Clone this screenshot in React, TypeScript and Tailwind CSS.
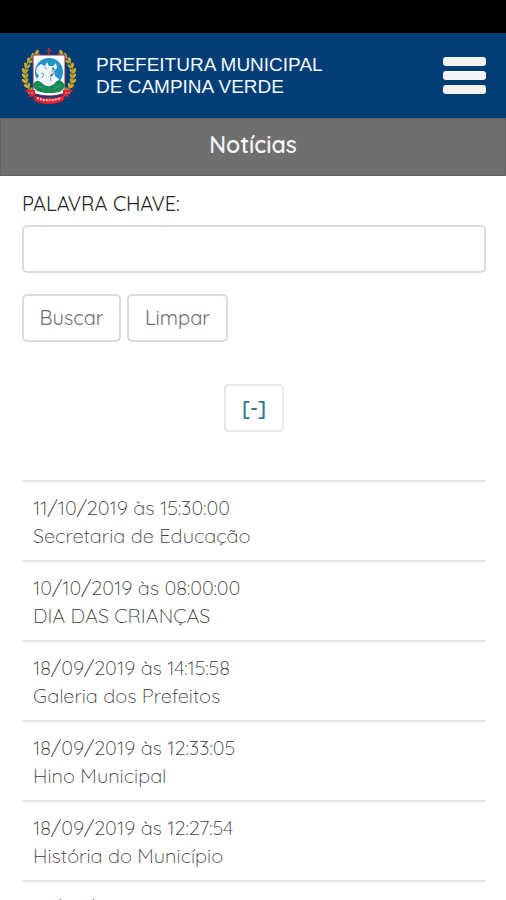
import {useState} from "react";

const news = [
  {id: 1, date: "11/10/2019 às 15:30:00", title: "Secretaria de Educação"},
  {id: 2, date: "10/10/2019 às 08:00:00", title: "DIA DAS CRIANÇAS"},
  {id: 3, date: "18/09/2019 às 14:15:58", title: "Galeria dos Prefeitos"},
  {id: 4, date: "18/09/2019 às 12:33:05", title: "Hino Municipal"},
  {id: 5, date: "18/09/2019 às 12:27:54", title: "História do Município"},
  {id: 6, date: "18/09/2019", title: ""},
];

// wheat leaves on the left side of the coat of arms, from top to bottom
const leaves = [
  {x: 18, y: 6, r: 60},
  {x: 14, y: 9, r: 45},
  {x: 10, y: 13, r: 30},
  {x: 7, y: 18, r: 15},
  {x: 5, y: 23, r: 5},
  {x: 5, y: 28, r: -5},
  {x: 5, y: 33, r: -15},
  {x: 7, y: 38, r: -25},
  {x: 10, y: 43, r: -35},
];

const Branch = () => (
  <g>
    <path
      d="M19 5C2 13 1 33 12 45"
      fill="none"
      stroke="#a58b28"
      strokeWidth="1.5"
    />
    {leaves.map((leaf) => (
      <g key={leaf.y} transform={`translate(${leaf.x} ${leaf.y}) rotate(${leaf.r})`}>
        <ellipse cx="-1.5" cy="0" rx="1.4" ry="2.8" fill="#d6a72b" transform="rotate(-28)" />
        <ellipse cx="2" cy="0" rx="1.3" ry="2.6" fill="#b6a13a" transform="rotate(28)" />
      </g>
    ))}
  </g>
);

const Crest = () => (
  <svg viewBox="0 0 58 58" className="h-[58px] w-[58px] shrink-0" aria-hidden="true">
    <Branch />
    <g transform="translate(58 0) scale(-1 1)">
      <Branch />
    </g>
    <path d="M29 1v8M26.5 3.5h5" stroke="#b52b3b" strokeWidth="1.6" fill="none" />
    <path
      d="M13 8h32v38c-10 4-22 4-32 0z"
      fill="#fbf9fb"
      stroke="#7d2a5c"
      strokeWidth="1"
    />
    <circle cx="29" cy="25" r="14" fill="#2493c8" />
    <path
      d="M17 20l4-3 4 2 2-4 2 4 4 0 3-3 1 5-3 3 1 5 4 3-3 8-8 2-9-2-4-6 4-5-3-4z"
      fill="#eef5f9"
    />
    <path d="M33 20l-1 3 2 3-4 3 1 5M24 20l3 2M21 26l3 1-2 4" stroke="#6aa3bd" fill="none" />
    <path d="M33 21l1 2M31 29l2-2" stroke="#31535e" strokeWidth="1.4" fill="none" />
    <path
      d="M13 38c3-7 7-4 10-1 4 3 8 3 12-1 3-4 6-4 10 2-1 7-7 8-16 8s-15-2-16-8z"
      fill="#178b55"
    />
    <path d="M19 39l5 3M34 42l6-4" stroke="#4fa673" fill="none" />
    <path d="M4 43h11v6l-7 1 2-3zM54 43H43v6l7 1-2-3z" fill="#dc2431" />
    <path d="M13 48c10 4 22 4 32 0l-2 6c-9 4-19 4-28 0z" fill="#ef1f2e" />
    <path d="M17 51c8 3 16 3 24 0" stroke="#f7ccd0" strokeWidth="2" strokeDasharray="2 1" fill="none" />
    <path d="M8 46h5M45 46h5" stroke="#f39b9e" strokeDasharray="2 1" />
  </svg>
);

const NewsPage = () => {
  const [keyword, setKeyword] = useState<string>("");

  const handleSubmit = (e: React.FormEvent) => {
    e.preventDefault();
  };

  return (
    <div className="h-screen overflow-hidden bg-white font-['Quicksand','Lato',sans-serif] text-xl text-[#3c3c3c]">
      <div className="h-[33px] bg-black" />
      <header className="flex h-[85px] items-center bg-[#003e75] px-5">
        <Crest />
        <h1 className="ml-[18px] flex-1 font-['Liberation_Sans',sans-serif] text-[19px] leading-[22px] text-[#f4f7fb]">
          PREFEITURA MUNICIPAL
          <br />
          DE CAMPINA VERDE
        </h1>
        <button type="button" aria-label="Menu" className="flex flex-col gap-[5px]">
          <span className="h-[9px] w-[43px] rounded-[3px] bg-[#f5f3f2]" />
          <span className="h-[9px] w-[43px] rounded-[3px] bg-[#f5f3f2]" />
          <span className="h-[9px] w-[43px] rounded-[3px] bg-[#f5f3f2]" />
        </button>
      </header>
      <h2 className="h-[58px] border border-[#626262] bg-[#6f6f6f] pt-3 text-center text-[23px] leading-7 font-semibold text-[#f5f5f5]">
        Notícias
      </h2>

      <main className="pt-[14px] pr-5 pl-[22px]">
        {/* Search Section */}
        <form onSubmit={handleSubmit}>
          <label htmlFor="keyword" className="block leading-7 text-[#222222]">
            PALAVRA CHAVE:
          </label>
          <input
            id="keyword"
            type="text"
            value={keyword}
            onChange={(e) => setKeyword(e.target.value)}
            className="mt-[7px] block h-12 w-full rounded-[5px] border-2 border-[#dcdcdc] px-3 outline-none"
          />
          <div className="mt-[21px] flex gap-[6px]">
            <button
              type="submit"
              className="h-12 w-[99px] rounded-[5px] border-2 border-[#dcdcdc] text-[#707070]"
            >
              Buscar
            </button>
            <button
              type="button"
              onClick={() => setKeyword("")}
              className="h-12 w-[101px] rounded-[5px] border-2 border-[#dcdcdc] text-[#707070]"
            >
              Limpar
            </button>
          </div>
        </form>

        <nav className="mt-[42px] flex justify-center">
          <a
            href="#"
            className="flex h-12 w-[60px] items-center justify-center rounded-[5px] border-2 border-[#e8e8e8] font-semibold text-[#2f7893]"
          >
            [-]
          </a>
        </nav>

        {/* News List */}
        <ul className="mt-12 font-light">
          {news.map((item) => (
            <li key={item.id} className="border-t-2 border-[#e5e5e5] px-[11px] pt-3 pb-[10px] leading-7">
              <p>{item.date}</p>
              <p>{item.title}</p>
            </li>
          ))}
        </ul>
      </main>
    </div>
  );
};

export default NewsPage;
